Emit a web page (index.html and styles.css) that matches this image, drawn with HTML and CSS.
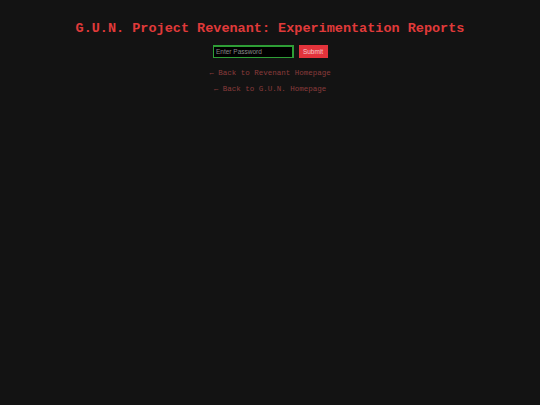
FILE: index.html
```html
<!DOCTYPE html>
<html>
<head>
<meta charset="utf-8">
<link rel="stylesheet" href="styles.css">
</head>
<body>
<div class="page">
  <h1 class="title">G.U.N. Project Revenant: Experimentation Reports</h1>
  <form class="login">
    <div class="pw-frame"><input class="pw" type="text" placeholder="Enter Password"></div>
    <button class="submit" type="button">Submit</button>
  </form>
  <a class="link" href="#">← Back to Revenant Homepage</a>
  <a class="link" href="#">← Back to G.U.N. Homepage</a>
</div>
</body>
</html>
```
FILE: styles.css
```css
html, body {
  margin: 0;
  padding: 0;
  background: #131313;
  height: 100%;
}
.page {
  display: flex;
  flex-direction: column;
  align-items: center;
  padding-top: 20px;
  font-family: "Liberation Mono", monospace;
}
.title {
  margin: 0;
  font-size: 13.5px;
  font-weight: bold;
  color: #e03a3a;
  line-height: 18px;
}
.login {
  display: flex;
  gap: 5px;
  margin-top: 7px;
  margin-bottom: 7px;
}
.pw-frame {
  display: flex;
  width: 81px;
  height: 13px;
  box-sizing: border-box;
  padding: 1.5px;
  background: #2e9e36;
}
.pw {
  -webkit-appearance: none;
  appearance: none;
  flex: 1;
  min-width: 0;
  height: 100%;
  box-sizing: border-box;
  background: #000;
  border: none;
  color: #ccc;
  font-family: "Liberation Sans", sans-serif;
  font-size: 6.5px;
  padding: 0 2px;
  outline: none;
}
.pw::placeholder {
  color: #8a8a8a;
}
.submit {
  width: 29px;
  height: 13px;
  box-sizing: border-box;
  background: #e3333b;
  color: #f6c8cc;
  border: none;
  font-family: "Liberation Sans", sans-serif;
  font-size: 6.5px;
  padding: 0;
}
.link {
  color: #8a3b3b;
  text-decoration: none;
  font-size: 7.5px;
  line-height: 16px;
}
```
